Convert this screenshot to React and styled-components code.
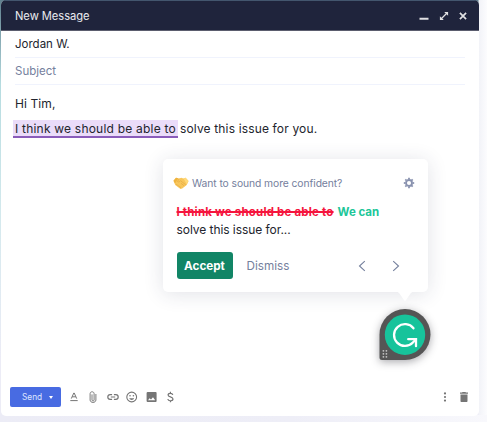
import React from "react";
import styled, { createGlobalStyle } from "styled-components";

const Global = createGlobalStyle`
  * { box-sizing: border-box; }
  body { margin: 0; background: #fff; font-family: Inter, sans-serif; }
  svg { display: block; flex: none; overflow: visible; }
`;

const Backdrop = styled.div`
  position: relative;
  width: 487px;
  height: 422px;
  overflow: hidden;
  padding-left: 1px;
  background:
    linear-gradient(90deg, transparent 478px, #f2f3f8 479px, #fcfcfe 487px) 0 0 / 487px 415px no-repeat,
    linear-gradient(90deg, #ececf6, #eeeef7 60%, #f8f8fc) 0 415px / 487px 7px no-repeat,
    linear-gradient(180deg, #60808f, #b6dce0 20%, #d3e9ed 50%, #ececf6 85%);
`;

const Window = styled.main`
  display: flex;
  flex-direction: column;
  width: 478px;
  height: 416px;
  border-radius: 5px;
  background: #fff;
  overflow: hidden;
`;

const TitleBar = styled.header`
  display: flex;
  align-items: center;
  height: 31px;
  flex: none;
  padding: 0 11px 0 14px;
  border-top: 1px solid #43566e;
  border-bottom: 1px solid #5b5d6e;
  background: #1f243c;
  color: #e9eaef;
  font-size: 11.2px;
  letter-spacing: -0.06px;
`;

const WindowControls = styled.div`
  display: flex;
  gap: 9.5px;
  margin-left: auto;
`;

const Fields = styled.div`
  display: flex;
  flex-direction: column;
  margin: 0 14px;
`;

const Field = styled.div`
  height: 27px;
  line-height: 26px;
  border-bottom: 1px solid #f0f3fd;
  font-size: 11.5px;
  color: ${(p) => (p.$muted ? "#75809d" : "#22242d")};
`;

const Body = styled.div`
  display: flex;
  flex-direction: column;
  flex: 1;
  padding: 9px 12px 0;
  color: #22242d;
  font-size: 12px;
  white-space: nowrap;
`;

const Greeting = styled.div`
  height: 26px;
  padding-left: 2px;
  line-height: 19px;
  letter-spacing: 0.1px;
`;

const Sentence = styled.div`
  display: flex;
  height: 18px;
  line-height: 18px;
  letter-spacing: 0.15px;
`;

const Highlight = styled.span`
  width: 165px;
  padding-left: 2px;
  margin-right: 2px;
  border-bottom: 2px solid #8a5cba;
  background: #eadcf9;
  letter-spacing: 0.21px;
`;

const Toolbar = styled.footer`
  display: flex;
  align-items: center;
  height: 20px;
  margin: 0 7px 9px 9px;
  color: #757575;
`;

const SendButton = styled.button`
  display: flex;
  align-items: center;
  justify-content: space-between;
  width: 51px;
  height: 20px;
  margin-right: 7px;
  padding: 0 8px 0 12px;
  border: 0;
  border-radius: 2px;
  background: #486be2;
  color: #dfe6ff;
  font: 400 8.3px Inter, sans-serif;
`;

const ToolGroup = styled.div`
  display: flex;
  gap: 3.4px;
`;

const EndGroup = styled.div`
  display: flex;
  gap: 3.5px;
  margin-left: auto;
`;

const Popup = styled.section`
  position: absolute;
  left: 163px;
  top: 159px;
  width: 265px;
  height: 133px;
  padding: 15px 12px 13px 13.5px;
  border-radius: 5px;
  background: #fff;
  box-shadow: 0 2px 20px rgba(45, 50, 85, 0.14);
  color: #22242d;
  font-size: 12px;
  white-space: nowrap;
`;

const PopupTail = styled.svg`
  position: absolute;
  left: 232px;
  top: 132px;
`;

const Prompt = styled.div`
  display: flex;
  align-items: center;
  height: 17px;
  margin-left: -3.5px;
  color: #75809d;
  font-size: 10.3px;
  letter-spacing: -0.07px;
  > span { margin-left: 3px; }
  > svg:last-child { margin-left: auto; margin-right: 1px; }
`;

const Suggestion = styled.div`
  margin-top: 12px;
  line-height: 18px;
  letter-spacing: -0.06px;
`;

const Removed = styled.del`
  font-weight: 700;
  font-size: 11.5px;
  letter-spacing: 0.19px;
  color: #f5143d;
  text-decoration: line-through 1.5px;
`;

const Added = styled.ins`
  margin-left: 4px;
  font-weight: 700;
  font-size: 11.5px;
  letter-spacing: 0;
  color: #20c698;
  text-decoration: none;
`;

const Actions = styled.div`
  display: flex;
  align-items: center;
  height: 27px;
  margin-top: 13px;
`;

const AcceptButton = styled.button`
  width: 56px;
  height: 27px;
  padding: 0;
  border: 0;
  border-radius: 3px;
  background: #118566;
  color: #fff;
  font: 700 11.7px Inter, sans-serif;
`;

const DismissButton = styled.button`
  margin-left: 14px;
  padding: 0;
  border: 0;
  background: none;
  color: #75809d;
  font: 400 11.7px Inter, sans-serif;
`;

const Pager = styled.div`
  display: flex;
  gap: 22px;
  margin-left: auto;
  margin-right: 14px;
`;

const Badge = styled.div`
  position: absolute;
  left: 379px;
  top: 309px;
  filter: drop-shadow(0 2px 4px rgba(20, 20, 30, 0.36));
`;

const Icon = ({ size = 16, width, children, ...rest }) => (
  <svg width={width || size} height={size} viewBox={`0 0 ${width || size} ${size}`} fill="none" {...rest}>
    {children}
  </svg>
);

const ToolIcon = ({ children, ...rest }) => (
  <Icon width={16} size={16} stroke="currentColor" strokeWidth="1.2" {...rest}>
    {children}
  </Icon>
);

const Handshake = () => (
  <Icon width={16} size={14}>
    <path d="M.5 4.7 3 1.7l3.3.7 2-.7 2 .7 2.3-.7 2.9 3.3-1.8 3.9-4.5 3.6-1.7.4-5.3-4Z" fill="#f8c65b" />
    <path d="m.5 4.7 2.5-3 2.2.6-3.1 5.3Z" fill="#efb33f" />
    <path d="m10.5 2.5 2.1-.8 2.9 3.3-1.7 3.2Z" fill="#ffd978" />
    <path d="m6.3 2.6-1.8 3c1.2.8 2.1.2 3-.9l5.2 4M3 8.1l5 3.6M8 7.3l3 2.4" stroke="#dda13b" strokeWidth=".5" />
  </Icon>
);

const Gear = () => (
  <Icon size={12}>
    <circle cx="6" cy="6" r="3" stroke="#8992af" strokeWidth="1.9" />
    <g stroke="#8992af" strokeWidth="1.8">
      {[0, 45, 90, 135, 180, 225, 270, 315].map((a) => (
        <path key={a} d="M6 2.2V.8" transform={`rotate(${a} 6 6)`} />
      ))}
    </g>
  </Icon>
);

export default function App() {
  return (
    <>
      <Global />
      <Backdrop>
        <Window>
          <TitleBar>
            <span>New Message</span>
            <WindowControls>
              <Icon size={10}><path d="M.5 7.8h9" stroke="#e0e0e2" strokeWidth="2" /></Icon>
              <Icon size={10}>
                <path d="m2 8 6-6" stroke="#e0e0e2" strokeWidth="1.2" />
                <path d="M5.2.9h3.9v3.9ZM.9 5.2v3.9h3.9Z" fill="#e0e0e2" />
              </Icon>
              <Icon size={10}><path d="m1.9 1.9 6.2 6.2M8.1 1.9 1.9 8.1" stroke="#e0e0e2" strokeWidth="1.7" /></Icon>
            </WindowControls>
          </TitleBar>
          <Fields>
            <Field>Jordan W.</Field>
            <Field $muted>Subject</Field>
          </Fields>
          <Body>
            <Greeting>Hi Tim,</Greeting>
            <Sentence>
              <Highlight>I think we should be able to</Highlight>
              <span>solve this issue for you.</span>
            </Sentence>
          </Body>
          <Toolbar>
            <SendButton>
              Send
              <Icon width={4} size={3}><path d="M0 0h4L2 3Z" fill="#fff" /></Icon>
            </SendButton>
            <ToolGroup>
              <ToolIcon><path d="M3.3 9.6 5.8 4h.4l2.5 5.6M4.2 7.8h3.6" strokeWidth="1" /><path d="M2.3 11.6h7.4" strokeWidth="1" /></ToolIcon>
              <ToolIcon><path d="M8.9 5v6c0 3.2-5.8 3.2-5.8 0V4.6c0-2.4 4-2.4 4 0V11c0 1.3-2.1 1.3-2.1 0V5.4" strokeWidth=".95" /></ToolIcon>
              <ToolIcon><path d="M5.1 5.6H3.2a2.4 2.4 0 0 0 0 4.8h1.9M6.9 5.6h1.9a2.4 2.4 0 0 1 0 4.8H6.9M3.8 8h4.4" /></ToolIcon>
              <ToolIcon><circle cx="5.7" cy="8" r="4.9" strokeWidth="1.1" /><path d="M3.2 9.2c.9 2.3 4.1 2.3 5 0Z" fill="currentColor" stroke="none" /><circle cx="4" cy="6.7" r=".8" fill="currentColor" stroke="none" /><circle cx="7.4" cy="6.7" r=".8" fill="currentColor" stroke="none" /></ToolIcon>
              <Icon><rect x=".6" y="3" width="10" height="10" rx="1" fill="currentColor" /><path d="m2 11.3 1.6-2.1 1.4 1.4 2-2.3 2.2 3Z" fill="#fff" /></Icon>
              <ToolIcon><path d="M7.8 5.8C7.3 3.9 3.1 3.8 3.1 6c0 2.3 4.9 1.4 4.9 4 0 2.3-4.8 2.3-5.2 0M5.4 2.8v1.7M5.4 11.5v1.7" /></ToolIcon>
            </ToolGroup>
            <EndGroup>
              <Icon fill="currentColor"><circle cx="8" cy="4.4" r="1.1" /><circle cx="8" cy="8" r="1.1" /><circle cx="8" cy="11.6" r="1.1" /></Icon>
              <Icon fill="currentColor"><path d="M4 3.6h2l.6-.7h2.8l.6.7h2v1.2H4ZM4.5 5.6h7v6.4c0 .6-.4 1-1 1h-5c-.6 0-1-.4-1-1Z" /></Icon>
            </EndGroup>
          </Toolbar>
        </Window>
        <Popup>
          <Prompt>
            <Handshake />
            <span>Want to sound more confident?</span>
            <Gear />
          </Prompt>
          <Suggestion>
            <Removed>I think we should be able to</Removed>
            <Added>We can</Added>
            <div>solve this issue for...</div>
          </Suggestion>
          <Actions>
            <AcceptButton>Accept</AcceptButton>
            <DismissButton>Dismiss</DismissButton>
            <Pager>
              <Icon size={12}><path d="M8.8 1.2 3.5 6l5.3 4.8" stroke="#75809d" strokeWidth="1.1" /></Icon>
              <Icon size={12}><path d="M3.2 1.2 8.5 6l-5.3 4.8" stroke="#75809d" strokeWidth="1.1" /></Icon>
            </Pager>
          </Actions>
          <PopupTail width="20" height="11" viewBox="0 0 20 11">
            <path d="M0 0h20c-2.3.3-3.4 1.3-4.5 2.5l-4.6 6.7q-.9 1-1.8 0L4.5 2.5C3.4 1.3 2.3.3 0 0" fill="#fff" />
          </PopupTail>
        </Popup>
        <Badge>
          <Icon size={52}>
            <path d="M.5 25.5a25.5 25.5 0 1 1 25.5 25.5H3a2.5 2.5 0 0 1-2.5-2.5Z" fill="#555" />
            <circle cx="26" cy="25.7" r="20.2" fill="#17c39b" />
            <path d="M34.5 19.3A10.9 10.9 0 1 0 33.9 33.5L37 30.2" stroke="#fff" strokeWidth="2.3" strokeLinecap="round" />
            <path d="M29.2 30.2H37v7" stroke="#fff" strokeWidth="2.3" strokeLinecap="round" strokeLinejoin="miter" />
            <g fill="#c4c4c4">
              {[41.8, 44.8, 47.8].map((y) => (
                <React.Fragment key={y}>
                  <circle cx="4.4" cy={y} r="0.9" />
                  <circle cx="7.4" cy={y} r="0.9" />
                </React.Fragment>
              ))}
            </g>
          </Icon>
        </Badge>
      </Backdrop>
    </>
  );
}
